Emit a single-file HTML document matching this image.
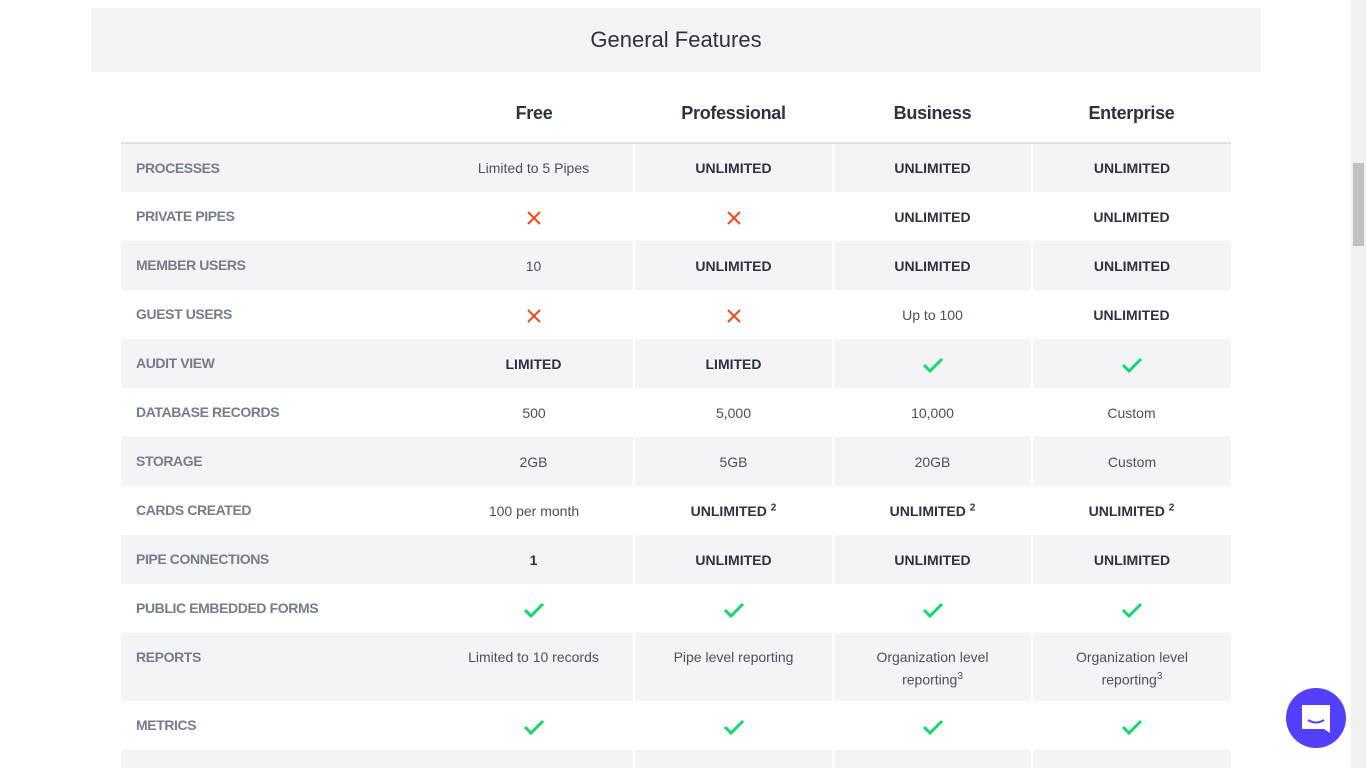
<!DOCTYPE html><html><head><meta charset="utf-8"><style>
*{margin:0;padding:0;box-sizing:border-box}
html,body{width:1366px;height:768px;overflow:hidden}
body{background:#fff;font-family:"Liberation Sans",sans-serif;position:relative}
.hd{position:absolute;left:91px;top:8px;width:1170px;height:64px;background:#f4f4f5;text-align:center;line-height:64px;font-size:22px;color:#2d3142}
table{position:absolute;left:121px;top:93px;border-collapse:collapse;width:1110px;table-layout:fixed}
th{height:50px;font-size:18px;font-weight:bold;color:#2d3142;border-bottom:2px solid #dedfe3;vertical-align:middle;padding-bottom:8px;letter-spacing:-0.3px}
td{height:49px;font-size:14px;color:#4a4f63;text-align:center;vertical-align:middle;padding-top:0}
td:first-child{text-align:left;padding-left:15px;color:#767b8e;font-weight:bold;letter-spacing:-0.4px;vertical-align:top;padding-top:16px}
tr.g td{background:#f4f4f6}
tr.g td+td+td{border-left:2px solid #fff}
svg{vertical-align:middle}
td svg{display:inline-block;margin-top:3px}
b{color:#2d3142;font-size:14px}
sup{font-size:10px}
.rp td{height:68px;vertical-align:top;padding-top:15px;line-height:19px}
.sb{position:absolute;right:0;top:0;width:15px;height:768px;background:#f1f1f1}
.th{position:absolute;right:2px;top:163px;width:11px;height:83px;background:#c1c1c1}
.chat{position:absolute;left:1286px;top:688px;width:60px;height:60px;border-radius:50%;background:#5340ff}
</style></head><body>
<div class="hd">General Features</div>
<table>
<colgroup><col style="width:313px"><col style="width:200px"><col style="width:199px"><col style="width:199px"><col style="width:199px"></colgroup>
<tr><th></th><th>Free</th><th>Professional</th><th>Business</th><th>Enterprise</th></tr>
<tr class="g"><td>PROCESSES</td><td>Limited to 5 Pipes</td><td><b>UNLIMITED</b></td><td><b>UNLIMITED</b></td><td><b>UNLIMITED</b></td></tr>
<tr><td>PRIVATE PIPES</td><td><svg width="16" height="16"><path d="M2 2L14 14M14 2L2 14" stroke="#f04a1b" stroke-width="2"/></svg></td><td><svg width="16" height="16"><path d="M2 2L14 14M14 2L2 14" stroke="#f04a1b" stroke-width="2"/></svg></td><td><b>UNLIMITED</b></td><td><b>UNLIMITED</b></td></tr>
<tr class="g"><td>MEMBER USERS</td><td>10</td><td><b>UNLIMITED</b></td><td><b>UNLIMITED</b></td><td><b>UNLIMITED</b></td></tr>
<tr><td>GUEST USERS</td><td><svg width="16" height="16"><path d="M2 2L14 14M14 2L2 14" stroke="#f04a1b" stroke-width="2"/></svg></td><td><svg width="16" height="16"><path d="M2 2L14 14M14 2L2 14" stroke="#f04a1b" stroke-width="2"/></svg></td><td>Up to 100</td><td><b>UNLIMITED</b></td></tr>
<tr class="g"><td>AUDIT VIEW</td><td><b>LIMITED</b></td><td><b>LIMITED</b></td><td><svg width="22" height="16"><path d="M2 8L8 14L20 2" stroke="#12d96a" stroke-width="3" fill="none"/></svg></td><td><svg width="22" height="16"><path d="M2 8L8 14L20 2" stroke="#12d96a" stroke-width="3" fill="none"/></svg></td></tr>
<tr><td>DATABASE RECORDS</td><td>500</td><td>5,000</td><td>10,000</td><td>Custom</td></tr>
<tr class="g"><td>STORAGE</td><td>2GB</td><td>5GB</td><td>20GB</td><td>Custom</td></tr>
<tr><td>CARDS CREATED</td><td>100 per month</td><td><b>UNLIMITED <sup>2</sup></b></td><td><b>UNLIMITED <sup>2</sup></b></td><td><b>UNLIMITED <sup>2</sup></b></td></tr>
<tr class="g"><td>PIPE CONNECTIONS</td><td><b>1</b></td><td><b>UNLIMITED</b></td><td><b>UNLIMITED</b></td><td><b>UNLIMITED</b></td></tr>
<tr><td>PUBLIC EMBEDDED FORMS</td><td><svg width="22" height="16"><path d="M2 8L8 14L20 2" stroke="#12d96a" stroke-width="3" fill="none"/></svg></td><td><svg width="22" height="16"><path d="M2 8L8 14L20 2" stroke="#12d96a" stroke-width="3" fill="none"/></svg></td><td><svg width="22" height="16"><path d="M2 8L8 14L20 2" stroke="#12d96a" stroke-width="3" fill="none"/></svg></td><td><svg width="22" height="16"><path d="M2 8L8 14L20 2" stroke="#12d96a" stroke-width="3" fill="none"/></svg></td></tr>
<tr class="g rp"><td>REPORTS</td><td>Limited to 10 records</td><td>Pipe level reporting</td><td>Organization level<br>reporting<sup>3</sup></td><td>Organization level<br>reporting<sup>3</sup></td></tr>
<tr><td>METRICS</td><td><svg width="22" height="16"><path d="M2 8L8 14L20 2" stroke="#12d96a" stroke-width="3" fill="none"/></svg></td><td><svg width="22" height="16"><path d="M2 8L8 14L20 2" stroke="#12d96a" stroke-width="3" fill="none"/></svg></td><td><svg width="22" height="16"><path d="M2 8L8 14L20 2" stroke="#12d96a" stroke-width="3" fill="none"/></svg></td><td><svg width="22" height="16"><path d="M2 8L8 14L20 2" stroke="#12d96a" stroke-width="3" fill="none"/></svg></td></tr>
<tr class="g"><td></td><td></td><td></td><td></td><td></td></tr>
</table>
<div class="sb"><div class="th"></div></div>
<div class="chat"><svg width="60" height="60"><path d="M16 17h28v28l-6-4H16z" fill="#fff"/><path d="M22 32q8 5 16 0" stroke="#5340ff" stroke-width="2" fill="none"/></svg></div>
</body></html>
